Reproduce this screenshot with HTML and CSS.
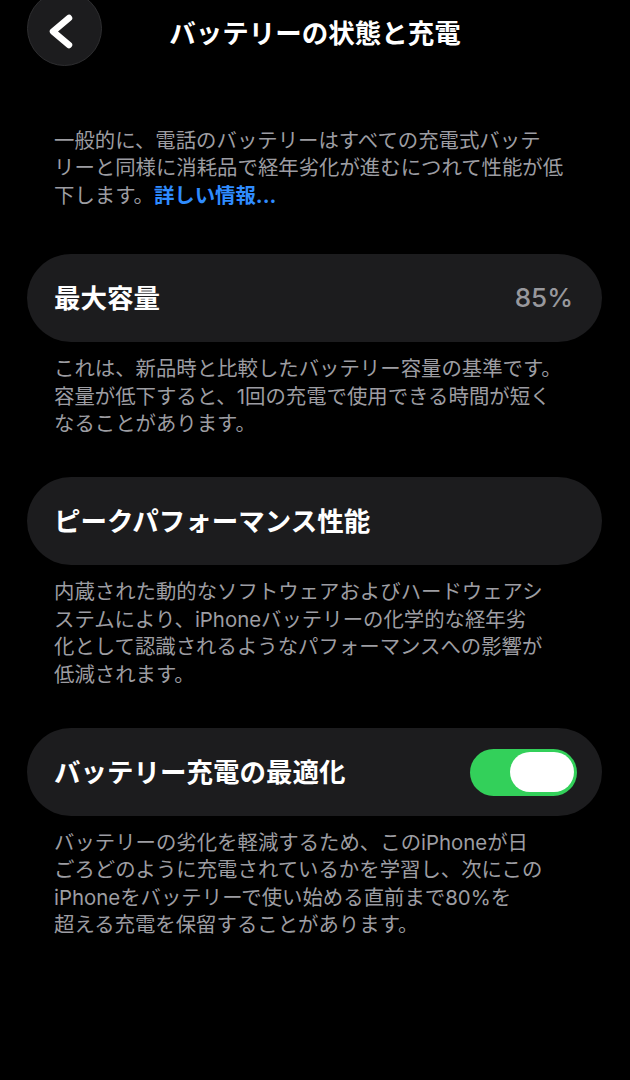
FILE: index.html
```html
<!DOCTYPE html>
<html lang="ja">
<head>
<meta charset="utf-8">
<title>バッテリーの状態と充電</title>
<link rel="stylesheet" href="styles.css">
</head>
<body>
<header class="nav">
  <div class="nav-side">
    <button class="back" aria-label="戻る">
      <svg viewBox="0 0 75 75" width="75" height="75">
        <path d="M42 27 L26 40.5 L42 54" fill="none" stroke="#fff" stroke-width="6.5" stroke-linecap="round" stroke-linejoin="round"/>
      </svg>
    </button>
  </div>
  <h1 class="nav-title">バッテリーの状態と充電</h1>
  <div class="nav-side"></div>
</header>

<main class="content">
  <p class="intro">一般的に、電話のバッテリーはすべての充電式バッテ<br>リーと同様に消耗品で経年劣化が進むにつれて性能が低<br>下します。<a class="link" href="#">詳しい情報...</a></p>

  <section class="group">
    <div class="row">
      <span class="row-label">最大容量</span>
      <span class="row-value">85%</span>
    </div>
    <p class="note">これは、新品時と比較したバッテリー容量の基準です。<br>容量が低下すると、1回の充電で使用できる時間が短く<br>なることがあります。</p>
  </section>

  <section class="group">
    <div class="row">
      <span class="row-label">ピークパフォーマンス性能</span>
    </div>
    <p class="note">内蔵された動的なソフトウェアおよびハードウェアシ<br>ステムにより、iPhoneバッテリーの化学的な経年劣<br>化として認識されるようなパフォーマンスへの影響が<br>低減されます。</p>
  </section>

  <section class="group">
    <div class="row row-toggle">
      <span class="row-label">バッテリー充電の最適化</span>
      <span class="switch on" role="switch" aria-checked="true"><span class="knob"></span></span>
    </div>
    <p class="note">バッテリーの劣化を軽減するため、このiPhoneが日<br>ごろどのように充電されているかを学習し、次にこの<br>iPhoneをバッテリーで使い始める直前まで80%を<br>超える充電を保留することがあります。</p>
  </section>
</main>
</body>
</html>
```
FILE: styles.css
```css
* { box-sizing: border-box; }

html, body {
  margin: 0;
  background: #000;
  color: #fff;
  font-family: Inter, "Noto Sans CJK JP", sans-serif;
}

body {
  width: 630px;
  min-height: 1080px;
  overflow: hidden;
}

/* navigation bar */
.nav {
  display: grid;
  grid-template-columns: 1fr auto 1fr;
  align-items: center;
  height: 66px;
}

.nav-side {
  display: flex;
  align-items: flex-start;
  height: 66px;
}

.back {
  width: 75px;
  height: 75px;
  margin: -9px 0 0 27px;
  padding: 0;
  border: 1px solid #2e2e30;
  border-radius: 50%;
  background: #1c1c1e;
  display: flex;
  align-items: center;
  justify-content: center;
}

.back svg { display: block; margin: -1px; }

.nav-title {
  margin: 0;
  font-size: 26.5px;
  font-weight: 700;
  line-height: 1;
}

/* body */
.content {
  padding: 0 28px 0 27px;
}

.intro,
.note {
  margin: 0;
  padding: 0 27px;
  font-size: 20.4px;
  line-height: 27.4px;
  color: #9d9da2;
  white-space: nowrap;
}

.intro {
  margin-top: 61px;
  margin-bottom: 45px;
}

.link {
  color: #2f8cff;
  text-decoration: none;
  font-weight: 700;
}

.group {
  margin-bottom: 40px;
}

.row {
  display: flex;
  align-items: center;
  justify-content: space-between;
  height: 88px;
  padding: 0 29px 0 27px;
  border-radius: 44px;
  background: #1c1c1e;
}

.row-toggle {
  padding-right: 25px;
}

.row-label {
  font-size: 26.5px;
  font-weight: 700;
  line-height: 1;
}

.row-value {
  font-size: 26px;
  font-weight: 500;
  color: #98989d;
  line-height: 1;
}

.note {
  margin-top: 13px;
}

/* toggle switch */
.switch {
  display: flex;
  align-items: center;
  justify-content: flex-end;
  width: 107px;
  height: 47px;
  padding: 0 3px;
  border-radius: 24px;
  background: #33d05a;
}

.knob {
  width: 64px;
  height: 40px;
  border-radius: 20px;
  background: #fff;
}
```
